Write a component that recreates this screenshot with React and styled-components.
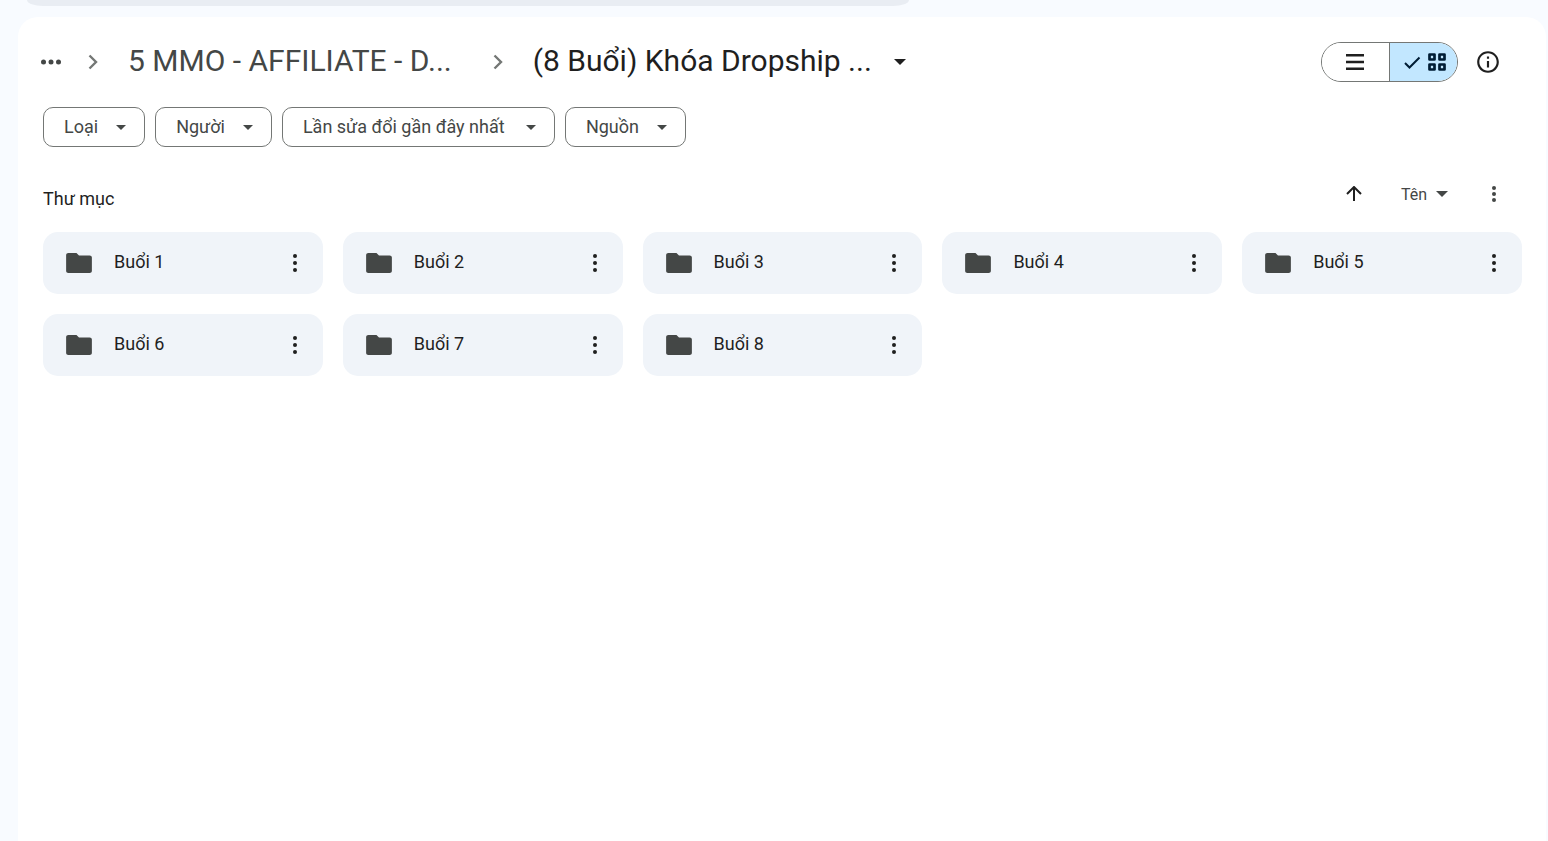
import React, { useState } from 'react';
import styled, { createGlobalStyle } from 'styled-components';

const GlobalStyle = createGlobalStyle`
  * {
    box-sizing: border-box;
  }

  body {
    margin: 0;
    background: #f8fbff;
    color: #1f1f1f;
    font-family: Roboto, 'Noto Sans', sans-serif;
  }

  button {
    margin: 0;
    padding: 0;
    border: 0;
    background: none;
    color: inherit;
    font: inherit;
    cursor: pointer;
  }

  svg {
    display: block;
    flex: none;
  }
`;

const Page = styled.div`
  display: flex;
  flex-direction: column;
  min-height: 100vh;
  padding: 0 2px 0 18px;
`;

const SearchEdge = styled.div`
  width: 57%;
  min-width: 882px;
  height: 6px;
  margin: 0 9px 11px;
  border-radius: 0 0 16px 16px / 0 0 6px 6px;
  background: #e9edf3;
`;

const Panel = styled.main`
  flex: 1;
  padding: 25px 24px 24px 25px;
  border-radius: 20px 20px 0 0;
  background: #fff;
`;

const Toolbar = styled.header`
  display: flex;
  align-items: center;
  justify-content: space-between;
  height: 40px;
  padding-right: 14px;
`;

const Breadcrumbs = styled.nav`
  display: flex;
  align-items: center;
  gap: 10px;
  margin-left: -12px;
  color: #444746;
`;

const Crumb = styled.button`
  display: flex;
  align-items: center;
  gap: 22px;
  padding: 0 24px 0 13px;
  color: ${(props) => (props.$current ? '#1f1f1f' : '#444746')};
  font-size: 30px;
  line-height: 38px;
  white-space: nowrap;
`;

const CrumbLabel = styled.span`
  padding-bottom: 2px;
`;

const IconButton = styled.button`
  display: flex;
  align-items: center;
  justify-content: center;
  width: 40px;
  height: 40px;
  color: ${(props) => props.$color || '#1f1f1f'};
`;

const ToolbarActions = styled.div`
  display: flex;
  align-items: center;
  gap: 10px;
`;

const ViewToggle = styled.div`
  display: flex;
  height: 40px;
  border: 1px solid #747775;
  border-radius: 20px;
  overflow: hidden;
`;

const ViewButton = styled.button`
  display: flex;
  align-items: center;
  justify-content: center;
  gap: 5px;
  width: 67px;
  padding-right: 2px;
  color: ${(props) => (props.$active ? '#001d35' : '#1f1f1f')};
  background: ${(props) => (props.$active ? '#c2e7ff' : '#fff')};

  & + & {
    width: 68px;
    padding-right: 0;
    border-left: 1px solid #747775;
  }
`;

const Filters = styled.div`
  display: flex;
  gap: 10px;
  margin-top: 25px;
`;

const Chip = styled.button`
  display: flex;
  align-items: center;
  justify-content: space-between;
  gap: 18px;
  min-width: ${(props) => (props.$wide ? '273px' : '102px')};
  height: 40px;
  padding: 0 18px 0 20px;
  border: 1px solid #747775;
  border-radius: 10px;
  color: #444746;
  font-size: 18px;
  line-height: 24px;
`;

const SectionHeader = styled.div`
  display: flex;
  align-items: center;
  justify-content: space-between;
  padding: 27px 8px 18px 0;
`;

const SectionTitle = styled.h2`
  margin: 0;
  padding-top: 10px;
  font-size: 18px;
  font-weight: 400;
  line-height: 24px;
`;

const SortControls = styled.div`
  display: flex;
  align-items: center;
`;

const SortButton = styled.button`
  display: flex;
  align-items: center;
  gap: 9px;
  height: 40px;
  padding: 0 26px 0 27px;
  color: #444746;
  font-size: 16px;
`;

const FolderGrid = styled.div`
  display: grid;
  grid-template-columns: repeat(5, 1fr);
  gap: 20px;
`;

const FolderCard = styled.article`
  display: flex;
  align-items: center;
  gap: 20px;
  height: 62px;
  padding: 0 8px 0 21px;
  border-radius: 15px;
  background: #f0f4f9;
`;

const FolderName = styled.span`
  flex: 1;
  padding-bottom: 2px;
  font-size: 18px;
  line-height: 24px;
`;

const Caret = ({ width = 10, height = 5 }) => (
  <svg width={width} height={height} viewBox='0 0 10 5'>
    <path d='M0 0h10L5 5z' fill='currentColor' />
  </svg>
);

const Chevron = () => (
  <svg width='24' height='24' viewBox='0 0 24 24' fill='none'>
    <path d='M8.5 5.5L15 12l-6.500 6.500' stroke='#747775' strokeWidth='2.400' />
  </svg>
);

const MoreHorizontal = () => (
  <svg width='22' height='6' viewBox='0 0 22 6' fill='currentColor'>
    <circle cx='3.500' cy='3' r='2.500' />
    <circle cx='11' cy='3' r='2.500' />
    <circle cx='18.500' cy='3' r='2.500' />
  </svg>
);

const MoreVertical = ({ height = 18 }) => (
  <svg width='4' height={height} viewBox={`0 0 4 ${height}`} fill='currentColor'>
    <circle cx='2' cy='2' r='2' />
    <circle cx='2' cy={height / 2} r='2' />
    <circle cx='2' cy={height - 2} r='2' />
  </svg>
);

const ListIcon = () => (
  <svg width='18' height='16' viewBox='0 0 18 16'>
    <path
      d='M1.250 1.250h15.500M1.250 8h15.500M1.250 14.750h15.500'
      stroke='currentColor'
      strokeWidth='2.500'
      strokeLinecap='square'
    />
  </svg>
);

const CheckIcon = () => (
  <svg width='22' height='24' viewBox='0 0 22 24' fill='none'>
    <path d='M4 13l4.500 4.500L18.500 7.500' stroke='currentColor' strokeWidth='2' />
  </svg>
);

const GridIcon = () => (
  <svg width='18' height='18' viewBox='0 0 18 18' fill='none'>
    <g stroke='currentColor' strokeWidth='2.700' strokeLinejoin='round'>
      <rect x='1.500' y='1.500' width='5' height='5' />
      <rect x='11.500' y='1.500' width='5' height='5' />
      <rect x='1.500' y='11.500' width='5' height='5' />
      <rect x='11.500' y='11.500' width='5' height='5' />
    </g>
  </svg>
);

const InfoIcon = () => (
  <svg width='26' height='26' viewBox='0 0 24 24' fill='currentColor'>
    <path d='M11 7h2v2h-2zm0 4h2v6h-2zm1-9C6.480 2 2 6.480 2 12s4.480 10 10 10 10-4.480 10-10S17.520 2 12 2zm0 18c-4.410 0-8-3.590-8-8s3.590-8 8-8 8 3.590 8 8-3.590 8-8 8z' />
  </svg>
);

const ArrowUpIcon = () => (
  <svg width='16' height='16' viewBox='0 0 16 16' fill='none'>
    <path
      d='M8 15V1.500M1 8l7-7 7 7'
      stroke='currentColor'
      strokeWidth='2'
    />
  </svg>
);

const FolderIcon = () => (
  <svg width='30' height='30' viewBox='0 0 24 24' fill='#444746'>
    <path d='M10 4H3.500C2.500 4 1.700 4.700 1.700 5.600v12.800c0 .9.800 1.600 1.800 1.600h17c1 0 1.800-.7 1.800-1.600V7.600c0-.9-.8-1.600-1.800-1.600H12l-2-2z' />
  </svg>
);

const filters = [
  { label: 'Loại' },
  { label: 'Người' },
  { label: 'Lần sửa đổi gần đây nhất', wide: true },
  { label: 'Nguồn' },
];

const folders = [
  'Buổi 1',
  'Buổi 2',
  'Buổi 3',
  'Buổi 4',
  'Buổi 5',
  'Buổi 6',
  'Buổi 7',
  'Buổi 8',
];

const App = () => {
  const [view, setView] = useState('grid');

  return (
    <>
      <GlobalStyle />
      <Page>
        <SearchEdge />
        <Panel>
          <Toolbar>
            <Breadcrumbs>
              <IconButton $color='#444746' aria-label='Hiện đường dẫn'>
                <MoreHorizontal />
              </IconButton>
              <Chevron />
              <Crumb>
                <CrumbLabel>5 MMO - AFFILIATE - D...</CrumbLabel>
              </Crumb>
              <Chevron />
              <Crumb $current>
                <CrumbLabel>(8 Buổi) Khóa Dropship ...</CrumbLabel>
                <Caret width={12} height={6} />
              </Crumb>
            </Breadcrumbs>
            <ToolbarActions>
              <ViewToggle>
                <ViewButton
                  $active={view === 'list'}
                  aria-label='Danh sách'
                  aria-pressed={view === 'list'}
                  onClick={() => setView('list')}
                >
                  <ListIcon />
                </ViewButton>
                <ViewButton
                  $active={view === 'grid'}
                  aria-label='Lưới'
                  aria-pressed={view === 'grid'}
                  onClick={() => setView('grid')}
                >
                  <CheckIcon />
                  <GridIcon />
                </ViewButton>
              </ViewToggle>
              <IconButton aria-label='Xem chi tiết'>
                <InfoIcon />
              </IconButton>
            </ToolbarActions>
          </Toolbar>
          <Filters>
            {filters.map((filter) => (
              <Chip key={filter.label} $wide={filter.wide}>
                {filter.label}
                <Caret />
              </Chip>
            ))}
          </Filters>
          <SectionHeader>
            <SectionTitle>Thư mục</SectionTitle>
            <SortControls>
              <IconButton aria-label='Đảo thứ tự'>
                <ArrowUpIcon />
              </IconButton>
              <SortButton>
                Tên
                <Caret width={12} height={6} />
              </SortButton>
              <IconButton $color='#444746' aria-label='Tùy chọn sắp xếp'>
                <MoreVertical height={16} />
              </IconButton>
            </SortControls>
          </SectionHeader>
          <FolderGrid>
            {folders.map((folder) => (
              <FolderCard key={folder}>
                <FolderIcon />
                <FolderName>{folder}</FolderName>
                <IconButton aria-label={`Thao tác khác cho ${folder}`}>
                  <MoreVertical />
                </IconButton>
              </FolderCard>
            ))}
          </FolderGrid>
        </Panel>
      </Page>
    </>
  );
};

export default App;
